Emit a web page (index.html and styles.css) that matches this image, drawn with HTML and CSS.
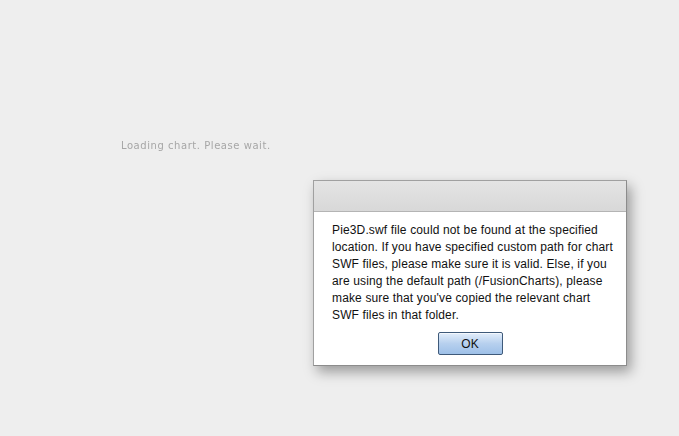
FILE: index.html
```html
<!DOCTYPE html>
<html lang="en">
<head>
  <meta charset="UTF-8">
  <title>Chart</title>
  <link rel="stylesheet" href="styles.css">
</head>
<body>
  <div class="chart">
    <div class="loading">Loading chart. Please wait.</div>
    <div class="dialog">
      <div class="dialog-title"></div>
      <div class="dialog-body">
        <p class="message">Pie3D.swf file could not be found at the specified location. If you have specified custom path for chart SWF files, please make sure it is valid. Else, if you are using the default path (/FusionCharts), please make sure that you've copied the relevant chart SWF files in that folder.</p>
        <div class="actions">
          <button class="ok">OK</button>
        </div>
      </div>
    </div>
  </div>
</body>
</html>
```

FILE: styles.css
```css
body {
  margin: 0;
  background: #eeeeee;
  font-family: Arial, "Liberation Sans", sans-serif;
  height: 436px;
  overflow: hidden;
}

.chart {
  padding: 139px 0 0 121px;
}

.loading {
  font-family: "DejaVu Sans", Verdana, sans-serif;
  font-size: 10px;
  letter-spacing: 0.55px;
  line-height: 14px;
  color: #a6a6a6;
  filter: blur(0.6px);
  height: 41px;
}

.dialog {
  margin-left: 192px;
  width: 312px;
  border: 1px solid #8c8c8c;
  border-top-color: #a0a0a0;
  border-left-color: #a0a0a0;
  background: #ffffff;
  box-shadow: 4px 6px 12px rgba(0, 0, 0, 0.35);
}

.dialog-title {
  height: 30px;
  border-bottom: 1px solid #b4b4b4;
  background: linear-gradient(#e4e4e4, #d8d8d8);
}

.dialog-body {
  padding: 10px 12px 10px 18px;
}

.message {
  margin: 0;
  font-size: 12px;
  line-height: 17px;
  letter-spacing: 0.14px;
  color: #111111;
}

.actions {
  display: flex;
  justify-content: center;
  margin-top: 8px;
  padding-right: 6px;
}

.ok {
  width: 65px;
  height: 23px;
  padding: 0;
  font-family: Arial, "Liberation Sans", sans-serif;
  font-size: 12px;
  color: #111111;
  border: 1px solid #3f5a7a;
  border-radius: 2px;
  background: linear-gradient(#e3eefb, #b7d0ee 50%, #9ec0e8);
  box-shadow: inset 0 1px 0 #f4f8fd;
}
```
